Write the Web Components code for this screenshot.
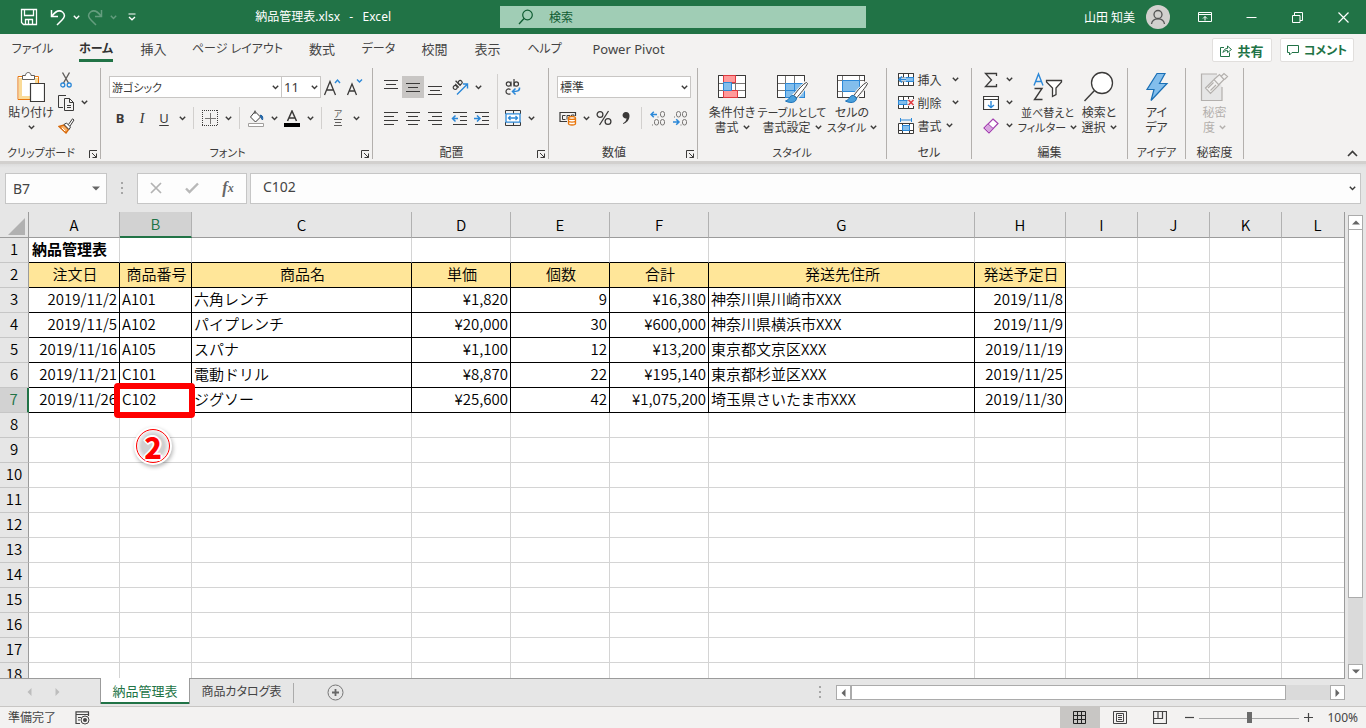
<!DOCTYPE html>
<html lang="ja">
<head>
<meta charset="utf-8">
<title>納品管理表.xlsx - Excel</title>
<style>
html, body { margin: 0; height: 100%; }
body { font-family: "Noto Sans", "Noto Sans CJK JP", sans-serif; font-size: 12px; color: #3b3a39; overflow: hidden; }
</style>
</head>
<body>
<xl-app></xl-app>
<script>
const svg = (w, h, body) => `<svg width="${w}" height="${h}" viewBox="0 0 ${w} ${h}" fill="none" stroke="currentColor" stroke-width="1" aria-hidden="true">${body}</svg>`;
const lines = (list, y0) => list.map(([a, b], i) => `<path d="M${a} ${y0 + i * 4}.5H${b}"/>`).join('');
const gridLines = '<path stroke="#797775" d="M8.5 .5V22M17.5 .5V22M.5 8.5H28M.5 15.5H28"/><path stroke="#3b3a39" d="M.5 .5H27.5V22.5H.5z"/>';
const brush = '<path fill="#f3f2f1" stroke="#f3f2f1" stroke-width="3" d="M29 7 16 21 19 24 31 9z"/><path fill="#fff" stroke="#3b3a39" d="M29.5 7.5C26 9 20 16 17 20.500L19.500 23C23 19 29 12 30.500 8.500z"/><path fill="#4aa0dc" stroke="#1a6fb5" d="M16.500 20.500C12 20 13 25 8.500 26 13 28.500 19.500 28 19.500 23z"/>';
const smallGrid = '<path fill="#fff" d="M.5 1.500H15.500V13.500H.5z"/><path stroke="#3b3a39" d="M.5 1.500H15.500V13.500H.5zM5.500 1.500V13.500M10.500 1.500V13.500M.5 5.500H15.500M.5 9.500H15.500"/>';
const ICONS = {
  chev: svg(7, 5, '<path stroke-width="1.400" d="M.8 .8 3.500 3.500 6.200 .8"/>'),
  up: svg(11, 7, '<path stroke-width="1.600" d="M1 6 5.500 1.500 10 6"/>'),
  launch: svg(10, 10, '<path d="M1.500 9V1.500H9M4 4 8.500 8.500M8.500 4.500V8.500H4.500"/>'),
  save: svg(18, 18, '<path stroke-width="1.300" d="M1.500 1.500H16.500V16.500H3.500L1.500 14.500zM4.500 1.500V7.500H13.500V1.500M5.500 16V11.500H12.500V16M8.500 12V16"/>'),
  undo: svg(16, 18, '<path stroke-width="1.500" d="M1.500 2V8.500H8M2 8C5 4 9 1.500 12.500 4 16 7 14 10 12 12L7 17"/>'),
  redo: svg(16, 18, '<path stroke-width="1.500" d="M14.500 2V8.500H8M14 8C11 4 7 1.500 3.500 4 0 7 2 10 4 12L9 17"/>'),
  qat: svg(8, 8, '<path d="M.5 1H7.500"/><path stroke-width="1.300" d="M1 4 4 6.800 7 4"/>'),
  search: svg(16, 16, '<circle cx="9.500" cy="6" r="4.800" stroke-width="1.200"/><path stroke-width="1.300" d="M6 9.500 1 15"/>'),
  person: svg(24, 24, '<circle cx="12" cy="12" r="12" fill="#d2d0ce" stroke="none"/><circle cx="12" cy="9.500" r="4" stroke="#555" stroke-width="1.300"/><path stroke="#555" stroke-width="1.300" d="M5.500 19C6 15.500 9 13.800 12 13.800S18 15.500 18.500 19"/>'),
  ribbonopt: svg(14, 12, '<path d="M.5 1.500H13.500V10.500H.5zM.5 3.500H13.500M7 9.500V5.500M5 7.500 7 5.500 9 7.500"/>'),
  min: svg(11, 11, '<path d="M.5 5.500H10.500"/>'),
  restore: svg(11, 11, '<path d="M.5 3.500H8V10.500H.5zM2.500 3.500V.5H10.500V8.500H8"/>'),
  close: svg(11, 11, '<path stroke-width="1.200" d="M.5 .5 10.500 10.500M10.500 .5 .5 10.500"/>'),
  share: svg(12, 13, '<path d="M4 3.500H.5V12.500H9.500V8.500M3 8.500C3.500 5.500 5.500 4.500 7.500 4.500V2L11.500 5.500 7.500 8.500V6.500C5.500 6.500 4 7 3 8.500z"/>'),
  comment: svg(12, 12, '<path d="M.5 1.500H11.500V8.500H5L2.500 11V8.500H.5z"/>'),
  paste: svg(28, 32, '<path fill="#fff" stroke="#e8760c" d="M1 5.500H21.500V28.500H1z"/><path stroke="#fadb98" stroke-width="3" d="M3.500 7V26.500H19.500V7"/><path fill="#fff" stroke="#605e5c" d="M5.500 8.500V4.500H8.500C8.500 .5 14 .5 14 4.500H17.500V8.500z"/><path fill="#fff" stroke="#3b3a39" stroke-width="1.200" d="M13.500 12.500H27.500V30.500H13.500z"/>'),
  cut: svg(12, 16, '<path stroke="#605e5c" stroke-width="1.400" d="M2.500 .5 8.500 11M9.500 .5 3.500 11"/><circle cx="2.800" cy="13" r="2" stroke="#2b88d8" stroke-width="1.300"/><circle cx="9.200" cy="13" r="2" stroke="#2b88d8" stroke-width="1.300"/>'),
  copy: svg(16, 16, '<path d="M5 12.500H.5V.5H8M6.500 3.500H11.500L15.500 7.500V15.500H6.500zM11.500 3.500V7.500H15.500M9 10.500H13M9 12.500H13"/>'),
  painter: svg(17, 16, '<path fill="#f9b26b" stroke="#d86a0c" stroke-width="1.400" d="M1 8.500 6 7 10.500 11.500 8 15z"/><path stroke="#fff" d="M4 10 7 13"/><path fill="#fff" stroke="#3b3a39" d="M6 6.500 11 11.500 12.500 9 8.500 5zM10.500 6.500 14.500 .8 16 2 12 8"/>'),
  growA: svg(18, 18, '<path stroke-width="1.300" d="M1.500 17 7 3.500 12.500 17M3.500 12H10.500"/><path stroke="#2b88d8" stroke-width="1.400" d="M12 5 14.500 2 17 5"/>'),
  shrinkA: svg(18, 18, '<path stroke-width="1.300" d="M2.500 17 7 6 11.500 17M4 13H10"/><path stroke="#2b88d8" stroke-width="1.400" d="M12 1.500 14.500 4 17 1.500"/>'),
  border: svg(16, 16, '<path stroke-dasharray="1 1" d="M0 .5H16M0 15.500H16M.5 0V16M15.500 0V16"/><path stroke="#797775" d="M8.500 3V14M3 8.500H14"/>'),
  fill: svg(17, 17, '<path fill="#fff" d="M7 1.500 12.500 7 7.500 12 2.500 7z"/><path d="M7 4V.5"/><path fill="#2b6fb5" stroke="#1a5fa0" d="M12.500 5C15 5.500 15 8 14.500 10 13.500 8.500 12.500 8 12.500 5z"/><path fill="#fff" stroke="#a19f9d" d="M.5 13.500H15.500V16.500H.5z"/>'),
  fontcolor: svg(16, 17, '<path stroke-width="1.500" d="M3.500 11 8 1 12.500 11M5 8H11"/><path fill="#000" stroke="none" d="M0 13H16V17H0z"/>'),
  top: svg(22, 22, lines([[4, 18], [6, 16], [4, 18]], 4)),
  mid: svg(22, 22, lines([[4, 18], [6, 16], [4, 18]], 7)),
  bot: svg(22, 22, lines([[4, 18], [6, 16], [4, 18]], 10)),
  left: svg(22, 22, lines([[4, 18], [4, 14], [4, 18], [4, 14]], 5)),
  center: svg(22, 22, lines([[4, 18], [6, 16], [4, 18], [6, 16]], 5)),
  right: svg(22, 22, lines([[4, 18], [8, 18], [4, 18], [8, 18]], 5)),
  outdent: svg(22, 22, lines([[4, 18], [11, 18], [11, 18], [4, 18]], 5) + '<path stroke="#2b88d8" stroke-width="1.500" d="M3.500 11.500H9M6.500 8.500 3.500 11.500 6.500 14.500"/>'),
  indent: svg(22, 22, lines([[4, 18], [11, 18], [11, 18], [4, 18]], 5) + '<path stroke="#2b88d8" stroke-width="1.500" d="M3 11.500H9M6 8.500 9 11.500 6 14.500"/>'),
  orient: svg(18, 18, '<g stroke-width="1.200" transform="rotate(-45 6 7)"><circle cx="3" cy="7.500" r="2"/><path d="M5.500 5V10M8 3V10"/><circle cx="10" cy="7.500" r="2"/></g><path stroke="#2b88d8" stroke-width="1.400" d="M6 16.500 16 6.500M12 6H16.500V10.500"/>'),
  wrap: svg(16, 18, '<g stroke-width="1.200"><circle cx="3.500" cy="6" r="2.200"/><path d="M6 3.500V8.500M9 1V8.500"/><circle cx="11.300" cy="6" r="2.200"/><path d="M5.500 11.500C3 10 1 11.500 1 13.500S3 17 5.500 15.700"/></g><path stroke="#2b88d8" stroke-width="1.500" d="M14.500 9.500C15 13 12 13.500 7.500 13.500M10.500 10.500 7.500 13.500 10.500 16.500"/>'),
  merge: svg(16, 16, '<path stroke="#3b3a39" d="M.5 4V.5H15.500V4M8.500 .5V4M.5 12V15.500H15.500V12M8.500 12V15.500"/><path fill="#fff" stroke="#2b88d8" stroke-width="1.300" d="M1 3.800H15V12.200H1z"/><path stroke="#2b88d8" stroke-width="1.300" d="M3.500 8H12.500M5.500 6 3.500 8 5.500 10M10.500 6 12.500 8 10.500 10"/>'),
  money: svg(18, 16, '<path stroke-width="1.200" d="M16.500 6V2.500H1V11.500H8"/><path d="M6.500 5.500H3.500V9.500H6.500M11 7V5.500H8V9.500M15 6V5H12.500V7"/><path fill="#fff" stroke="#e8760c" stroke-width="1.300" d="M9.500 8V13.500C9.500 15.500 16.500 15.500 16.500 13.500V8C16.500 6 9.500 6 9.500 8C9.500 9.800 16.500 9.800 16.500 8M9.500 10.800C9.500 12.500 16.500 12.500 16.500 10.800"/>'),
  percent: svg(16, 16, '<circle cx="4" cy="4.500" r="2.900" stroke-width="1.300"/><circle cx="12" cy="11.500" r="2.900" stroke-width="1.300"/><path stroke-width="1.300" d="M12.500 1 3.500 15"/>'),
  comma: svg(10, 14, '<path fill="currentColor" stroke="none" d="M5 1A3.200 3.200 0 1 0 5.500 7.300C5.500 9.500 4 11.300 2 12.300V13C5.500 12 8.500 9 8.500 4.700 8.500 2.500 7.200 1 5 1z"/>'),
  decinc: svg(16, 16, '<g stroke="#797775"><rect x="10.500" y="1.500" width="4" height="5.500" rx="2"/><rect x="4.500" y="9.500" width="4" height="5.500" rx="2"/><rect x="10.500" y="9.500" width="4" height="5.500" rx="2"/><path d="M7.500 7H8.500M2 15H3"/></g><path stroke="#2b88d8" stroke-width="1.500" d="M1 4.500H7M3.800 1.700 1 4.500 3.800 7.300"/>'),
  decdec: svg(16, 16, '<g stroke="#797775"><rect x="4.500" y="1.500" width="4" height="5.500" rx="2"/><rect x="10.500" y="1.500" width="4" height="5.500" rx="2"/><rect x="10.500" y="9.500" width="4" height="5.500" rx="2"/><path d="M2 7H3M8.500 15H9.500"/></g><path stroke="#2b88d8" stroke-width="1.500" d="M1 12H7M4.200 9.200 7 12 4.200 14.800"/>'),
  cond: svg(32, 32, `<g transform="translate(2 4)"><path fill="#fff" d="M.5 .5H27.500V22.500H.5z"/>${gridLines}<path fill="#ff9a9a" stroke="#e0383e" d="M5.500 .5H17.500V7.500H5.500zM5.500 15.500H19.500V22.500H5.500z"/><path fill="#83beec" stroke="#2b88d8" d="M5.500 7.500H13.500V15.500H5.500z"/></g>`),
  tablefmt: svg(32, 32, `<g transform="translate(1 4)"><path fill="#fff" d="M.5 .5H27.500V22.500H.5z"/>${gridLines}<path fill="#83beec" stroke="#2b88d8" d="M8.500 8.500H27.500V22.500H8.500zM17.500 8.500V22.500M8.500 15.500H27.500"/>${brush}</g>`),
  cellstyle: svg(32, 32, `<g transform="translate(1 4)"><path fill="#fff" d="M.5 .5H27.500V22.500H.5z"/><path stroke="#797775" d="M5.500 .5V22M22.500 .5V22M.5 5.500H28M.5 16.500H28"/><path stroke="#3b3a39" d="M.5 .5H27.500V22.500H.5z"/><path fill="#83beec" stroke="#2b88d8" d="M5.500 5.500H22.500V16.500H5.500z"/>${brush}</g>`),
  cins: svg(16, 15, smallGrid + '<path fill="#83beec" stroke="#2b88d8" d="M6.500 5.500H15.500V9.500H6.500z"/><path stroke="#f3f2f1" stroke-width="4" d="M1 7.500H8"/><path stroke="#2b88d8" stroke-width="1.500" d="M1 7.500H8M4 4.500 1 7.500 4 10.500"/>'),
  cdel: svg(16, 15, smallGrid + '<path fill="#83beec" stroke="#2b88d8" d="M.5 5.500H9V9.500H.5z"/><path fill="#f3f2f1" stroke="none" d="M9.500 4H16V11H9.500z"/><path stroke="#e0383e" stroke-width="1.500" d="M10.500 5 15.500 10M15.500 5 10.500 10"/>'),
  cfmt: svg(16, 16, '<path stroke="#2b88d8" d="M2.500 0V4M13.500 0V4M2.500 2H13.500"/><path fill="#fff" stroke="#3b3a39" d="M.5 5.500H15.500V15.500H.5zM4.500 5V15M11.500 5V15M.5 12.500H15.500"/><path fill="#83beec" stroke="#2b88d8" d="M4.500 7.500H11.500V12.500H4.500z"/>'),
  sum: svg(14, 16, '<path stroke-width="1.300" d="M12.500 4V1.500H1.500L7.500 8 1.500 14.500H12.500V12"/>'),
  filldown: svg(16, 14, '<path fill="#fff" stroke-width="1.200" d="M.5 .5H15.500V13.500H.5zM.5 3.500H15.500"/><path stroke="#2b88d8" stroke-width="1.400" d="M8 5V11.500M5 9 8 11.500 11 9"/>'),
  erase: svg(16, 16, '<path fill="#fff" stroke="#a33fb0" stroke-width="1.200" d="M10 1 15 5.500 6 15 1 10z"/><path fill="#d8a5df" stroke="#a33fb0" d="M5 5.800 10.200 10.500 6 15 1 10z"/>'),
  sort: svg(30, 32, '<path stroke="#2b88d8" stroke-width="1.400" d="M1 14.500 5.500 3 10 14.500M2.500 10.500H8.500"/><path stroke-width="1.400" d="M1.500 17.500H9L1.500 28.500H9.500"/><path fill="#fff" stroke-width="1.300" d="M13.500 9.500H28.500V11L23 17V23.500L19.500 25.500V17L13.500 11z"/>'),
  find: svg(32, 32, '<circle cx="19" cy="12" r="10.500" fill="#fff" stroke-width="1.300"/><path stroke-width="1.400" d="M11.500 19.500 1.500 30"/>'),
  bolt: svg(24, 32, '<path fill="#83beec" stroke="#1a6fb5" stroke-width="1.200" d="M12 2.500H20L14.500 12.500H22L6 29.500 9 18.500H2z"/>'),
  sens: svg(30, 32, '<g stroke="#b3b0ad" stroke-width="1.200"><path fill="#e6e6e6" d="M17 3H1.500V29.500H22V16"/><path fill="#f3f2f1" d="M5.500 17 14 8.500 19 14 10.500 22.500zM8 17 13.500 11.500M10.500 19.500 16 14M14 8.500 19.500 3.500 24 8.500 19 13.500M21 5.500 24 2.500 27.500 5.500 24.500 8.500"/></g>'),
  x: svg(12, 12, '<path stroke="#b3b3b3" stroke-width="1.700" d="M1 1 11 11M11 1 1 11"/>'),
  check: svg(14, 12, '<path stroke="#b8b8b8" stroke-width="2.400" d="M1 6.500 4.500 10 13 1.500"/>'),
  tri: svg(8, 5, '<path fill="#666" stroke="none" d="M0 .5H8L4 4.500z"/>'),
  triup: svg(8, 5, '<path fill="#666" stroke="none" d="M0 4.500H8L4 .5z"/>'),
  tril: svg(5, 8, '<path fill="currentColor" stroke="none" d="M4.500 0V8L.5 4z"/>'),
  trir: svg(5, 8, '<path fill="currentColor" stroke="none" d="M.5 0V8L4.500 4z"/>'),
  dots: svg(3, 12, '<path fill="#a6a6a6" stroke="none" d="M0 0H2V2H0zM0 5H2V7H0zM0 10H2V12H0z"/>'),
  corner: svg(18, 18, '<path fill="#b1b1b1" stroke="none" d="M17 0V17H0z"/>'),
  plus: svg(17, 17, '<circle cx="8.500" cy="8.500" r="7.500" stroke="#767676"/><path stroke="#666" stroke-width="1.800" d="M8.500 5V12M5 8.500H12"/>'),
  macro: svg(15, 14, '<path stroke-width="1.200" d="M5 12.500H1V.8H13.500V5M1 3.500H13.500M3 6.500H6M3 9H5"/><circle cx="10" cy="9" r="4"/><circle cx="10" cy="9" r="2" fill="currentColor" stroke="none"/>'),
  vnormal: svg(14, 14, '<path stroke="#222" d="M.5 .5H12.500V12.500H.5zM4.500 .5V12.500M8.500 .5V12.500M.5 4.500H12.500M.5 8.500H12.500"/>'),
  vlayout: svg(14, 14, '<path d="M.5 .5H13.500V12.500H.5zM3.500 2.500H10.500V10.500H3.500zM5 4.500H9M5 6.500H9M5 8.500H9"/>'),
  vbreak: svg(14, 14, '<path stroke-width="1.200" d="M.5 .5H13.500V12.500H.5zM5 .5V7.500H9.500V.5M.5 7.500H5"/>')
};

/* Shared rules for every shadow root. */
const base = `
*, *::before { box-sizing: border-box; }
:host { display: block; box-sizing: border-box; font-feature-settings: "palt"; }
svg { display: block; flex: none; }
button, select, input { font: inherit; font-feature-settings: inherit; color: inherit; background: none; border: 0; padding: 0; margin: 0; border-radius: 0; }
button { display: inline-flex; align-items: center; justify-content: center; white-space: nowrap; }
.kana { font-size: 11px; }`;

function define(name, css, html) {
  customElements.define(name, class extends HTMLElement {
    constructor() {
      super();
      const t = document.createElement('template');
      t.innerHTML = `<style>${base}${css}</style>${typeof html === 'function' ? html(this) : html}`;
      this.attachShadow({ mode: 'open' }).append(t.content.cloneNode(true));
    }
  });
}

const I = n => ICONS[n];
const kana = s => /[\u3041-\u30ff]{4,}/.test(s) || /べ/.test(s) ? 'kana' : '';
const tool = (n, label, cls = '') => `<button type="button" class="t ${cls}" aria-label="${label}">${I(n)}</button>`;
const drop = label => `<button type="button" class="c" aria-label="${label}">${I('chev')}</button>`;
const sep = '<span class="s"></span>';

define('title-bar', `
:host { display: grid; grid-template-columns: 1fr 366px 1fr; height: 34px; background: #217346; color: #fff; align-items: center; }
.left, .right { display: flex; align-items: center; height: 100%; }
.left { padding-left: 20px; }
.left button { height: 24px; }
.sv { width: 18px; margin-right: 9px; } .un { width: 22px; } .cv { width: 15px; } .rd { width: 22px; } .dim { opacity: .3; }
h1 { font-size: 12px; font-weight: 400; line-height: 16px; margin: 0 109px 0 auto; white-space: pre; }
.search { display: flex; align-items: center; gap: 15px; height: 22px; background: #a0cdb5; color: #0f5c32; padding-left: 18px; }
.search input { flex: 1; min-width: 0; height: 20px; outline: 0; }
.search input::placeholder { color: inherit; opacity: 1; }
.right { justify-content: flex-end; }
.user { gap: 11px; margin-right: 12px; height: 100%; }
.win { width: 46px; height: 100%; }`, `
<div class="left">
<button class="sv" type="button" aria-label="上書き保存">${I('save')}</button>
<button class="un" type="button" aria-label="元に戻す">${I('undo')}</button><button class="cv" type="button" aria-label="元に戻す一覧">${I('chev')}</button>
<button class="rd dim" type="button" aria-label="やり直し">${I('redo')}</button><button class="cv dim" type="button" aria-label="やり直し一覧">${I('chev')}</button>
<button class="un" type="button" aria-label="クイック アクセス">${I('qat')}</button>
<h1>納品管理表.xlsx   -   Excel</h1></div>
<label class="search">${I('search')}<input type="text" placeholder="検索" aria-label="検索"></label>
<div class="right"><button class="user" type="button">山田 知美${I('person')}</button>
<button class="win" type="button" aria-label="リボンの表示オプション">${I('ribbonopt')}</button>
<button class="win" type="button" aria-label="最小化">${I('min')}</button>
<button class="win" type="button" aria-label="元のサイズ">${I('restore')}</button>
<button class="win" type="button" aria-label="閉じる">${I('close')}</button></div>`);

define('ribbon-tabs', `
:host { display: flex; align-items: center; height: 32px; background: #f3f2f1; color: #444; padding-right: 12px; }
nav { display: grid; grid-template-columns: 65px 62px 53px 115px 54px 59px 53px 53px 61px 107px; flex: 1; height: 100%; }
nav button { font-size: 13px; line-height: 20px; height: 28px; padding-top: 2px; }
nav .k { font-size: 12px; }
nav .on { font-size: 12px; font-weight: 700; justify-self: center; border-bottom: 3px solid #217346; padding-top: 5px; width: 34px; color: #323130; }
.act { height: 24px; background: #fff; border: 1px solid #e1dfdd; border-radius: 2px; color: #217346; font-weight: 700; gap: 5px; margin-left: 8px; }
.share { width: 60px; font-size: 13px; } .cm { width: 74px; }`, `
<nav>${['ファイル', 'ホーム', '挿入', 'ページ レイアウト', '数式', 'データ', '校閲', '表示', 'ヘルプ', 'Power Pivot'].map((t, i) => `<button type="button" class="${i === 1 ? 'on' : /[ァ-ー]{3}/.test(t) ? 'k' : ''}">${t}</button>`).join('')}</nav>
<button type="button" class="act share">${I('share')}共有</button><button type="button" class="act cm">${I('comment')}コメント</button>`);

define('ribbon-group', `
:host { display: flex; flex-direction: column; height: 91px; border-right: 1px solid #b3b0ad; flex: none; }
.body { height: 77px; }
footer { display: grid; grid-template-columns: 1fr; height: 14px; line-height: 16px; white-space: nowrap; align-items: center; }
footer.two { grid-template-columns: 1fr 18px; }
footer span { justify-self: center; }
footer button { justify-self: end; margin: 2px 2px 0 0; }`,
  el => {
    const label = el.getAttribute('label'), two = el.hasAttribute('launcher');
    return `<div class="body"><slot></slot></div><footer class="${two ? 'two' : ''}"><span class="${kana(label)}">${label}</span>${two ? `<button type="button" aria-label="詳細設定">${I('launch')}</button>` : ''}</footer>`;
  });

const big = (n, l1, l2, w, cls = '', c = true) => `<button type="button" class="big ${cls}" style="width:${w}px"><span class="ic">${I(n)}</span><span class="${kana(l1)}">${l1}</span><span class="l2 ${kana(l2)}">${l2}${c ? I('chev') : ''}</span></button>`;
define('xl-ribbon', `
:host { display: flex; height: 98px; padding-top: 2px; background: #f3f2f1; border-bottom: 3px solid #d2d0ce; }
.row { display: flex; align-items: center; }
.tools { display: flex; flex-direction: column; gap: 9px; padding: 8px 6px 0 8px; }
.tools .row { height: 22px; }
.t { width: 22px; height: 22px; flex: none; }
.c { width: 14px; height: 22px; flex: none; }
.s { width: 1px; height: 22px; margin: 0 5px 0 4px; background: #d2d0ce; flex: none; }
.sel { background: #c8c6c4; }
.b { font-weight: 700; font-size: 13px; } .i { font-style: italic; font-family: "Liberation Serif", serif; font-size: 15px; } .u { text-decoration: underline; text-underline-offset: 2px; font-size: 13px; }
.combo { display: grid; grid-template-columns: 1fr 9px; align-items: center; height: 22px; border: 1px solid #c8c6c4; background: #fff; }
.combo select { appearance: none; grid-area: 1 / 1 / 2 / 3; height: 20px; padding-left: 2px; width: 100%; outline: 0; }
.combo svg { grid-area: 1 / 2; pointer-events: none; }
.size select { font-size: 13px; }
.big { display: flex; flex-direction: column; align-items: center; justify-content: flex-start; line-height: 15px; height: 77px; padding-top: 1px; }
.big .ic { display: grid; place-items: center; height: 36px; }
.l2 { display: flex; align-items: center; gap: 4px; min-height: 15px; }
.side { display: grid; align-content: start; }
.side .row { height: 23px; }
.lab { gap: 3px; }
.off { color: #b3b0ad; }
.ruby { display: grid; gap: 1px; justify-items: center; font-size: 9px; line-height: 9px; color: #605e5c; }
.halign { display: grid; grid-template-columns: 117px 50px; padding-left: 7px; }
.halign > .tools { padding-left: 0; padding-right: 0; }
.halign > .wrapcol { background: linear-gradient(#d2d0ce, #d2d0ce) 0 6px / 1px 59px no-repeat; padding-left: 5px; }
.collapse { margin: 82px 8px 0 auto; align-self: flex-start; }`, `
<ribbon-group label="クリップボード" launcher style="width:101px"><div class="row" style="align-items:flex-start;padding-left:7px">${big('paste', '貼り付け', '', 48)}
<div class="side"><div class="row">${tool('cut', '切り取り')}</div><div class="row">${tool('copy', 'コピー')}${drop('コピー一覧')}</div><div class="row">${tool('painter', '書式のコピー')}</div></div></div></ribbon-group>
<ribbon-group label="フォント" launcher style="width:272px"><div class="tools"><div class="row">
<label class="combo" style="width:173px"><select class="kana" aria-label="フォント名"><option>游ゴシック</option></select>${I('chev')}</label>
<label class="combo size" style="width:40px;margin-left:-1px"><select aria-label="サイズ"><option>11</option></select>${I('chev')}</label>
${tool('growA', 'フォント サイズの拡大')}${tool('shrinkA', 'フォント サイズの縮小')}</div>
<div class="row"><button type="button" class="t b">B</button><button type="button" class="t i">I</button><button type="button" class="t u">U</button>${drop('下線')}${sep}${tool('border', '罫線')}${drop('罫線一覧')}${sep}${tool('fill', '塗りつぶし')}${drop('塗りつぶし一覧')}${tool('fontcolor', 'フォントの色')}${drop('フォントの色一覧')}${sep}<button type="button" class="t" aria-label="ふりがな"><span class="ruby">ア${svg(8, 8, '<path d="M0 .5H8M1 3.500H7M0 6.500H8"/>')}</span></button>${drop('ふりがな一覧')}</div></div></ribbon-group>
<ribbon-group label="配置" launcher style="width:176px"><div class="halign"><div class="tools">
<div class="row">${tool('top', '上揃え')}${tool('mid', '上下中央揃え', 'sel')}${tool('bot', '下揃え')}<span style="width:3px"></span>${tool('orient', '方向')}${drop('方向一覧')}</div>
<div class="row">${tool('left', '左揃え')}${tool('center', '中央揃え')}${tool('right', '右揃え')}<span style="width:3px"></span>${tool('outdent', 'インデントを減らす')}${tool('indent', 'インデントを増やす')}</div></div>
<div class="tools wrapcol"><div class="row">${tool('wrap', '折り返して全体を表示する')}</div><div class="row">${tool('merge', 'セルを結合して中央揃え')}${drop('結合一覧')}</div></div></div></ribbon-group>
<ribbon-group label="数値" launcher style="width:149px"><div class="tools"><div class="row"><label class="combo" style="width:134px"><select aria-label="表示形式"><option>標準</option></select>${I('chev')}</label></div>
<div class="row">${tool('money', '通貨表示形式')}${drop('通貨一覧')}${tool('percent', 'パーセント')}${tool('comma', '桁区切り')}${sep}${tool('decinc', '小数点以下の表示桁数を増やす')}${tool('decdec', '小数点以下の表示桁数を減らす')}</div></div></ribbon-group>
<ribbon-group label="スタイル" style="width:189px"><div class="row" style="padding-left:4px">${big('cond', '条件付き', '書式', 60)}${big('tablefmt', 'テーブルとして', '書式設定', 60)}${big('cellstyle', 'セルの', 'スタイル', 60)}</div></ribbon-group>
<ribbon-group label="セル" style="width:85px"><div class="side" style="padding-left:11px">${[['cins', '挿入'], ['cdel', '削除'], ['cfmt', '書式']].map(([n, l], k) => `<div class="row"><button type="button" class="lab" style="width:44px">${I(n)}${l}</button><button type="button" class="c" aria-label="${l}一覧" style="margin-left:${k < 2 ? 6 : 0}px">${I('chev')}</button></div>`).join('')}</div></ribbon-group>
<ribbon-group label="編集" style="width:156px"><div class="row" style="align-items:flex-start;padding-left:8px"><div class="side"><div class="row">${tool('sum', 'オート SUM')}${drop('オート SUM 一覧')}</div><div class="row">${tool('filldown', 'フィル')}${drop('フィル一覧')}</div><div class="row">${tool('erase', 'クリア')}${drop('クリア一覧')}</div></div>
${big('sort', '並べ替えと', 'フィルター', 63)}${big('find', '検索と', '選択', 40)}</div></ribbon-group>
<ribbon-group label="アイデア" style="width:58px">${big('bolt', 'アイ', 'デア', 57, '', false)}</ribbon-group>
<ribbon-group label="秘密度" style="width:58px">${big('sens', '秘密', '度', 57, 'off')}</ribbon-group>
<button type="button" class="collapse" aria-label="リボンを折りたたむ">${I('up')}</button>`);

define('formula-bar', `
:host { display: flex; align-items: center; height: 48px; padding: 0 5px; background: linear-gradient(#dcdcdc, #e6e6e6 4px); font-size: 14px; }
.box { display: flex; align-items: center; height: 31px; background: #fdfdfd; border: 1px solid #c6c6c6; }
.name { width: 102px; padding: 0 6px 0 7px; }
input { min-width: 0; flex: 1; outline: 0; height: 26px; color: #444; }
.dots { margin: 0 13px 0 14px; }
.fn { width: 110px; margin-right: 3px; }
.fn button { width: 36px; height: 29px; }
.fx { font: italic 700 16px "Liberation Serif", serif; color: #666; }
.fx small { font-size: 12px; }
.in { flex: 1; padding: 0 4px 0 12px; }
.in input { padding-bottom: 4px; }`, `
<div class="box name"><input aria-label="名前ボックス" value="B7">${I('tri')}</div><span class="dots">${I('dots')}</span>
<div class="box fn"><button type="button" aria-label="キャンセル">${I('x')}</button><button type="button" aria-label="入力">${I('check')}</button><button type="button" class="fx" aria-label="関数の挿入">f<small>x</small></button></div>
<div class="box in"><input aria-label="数式バー" value="C102">${I('chev')}</div>`);

const COLS = [['A', 91], ['B', 72], ['C', 220], ['D', 99], ['E', 99], ['F', 99], ['G', 266], ['H', 91], ['I', 72], ['J', 72], ['K', 72], ['L', 72]];
const DATA = [
  ['注文日', '商品番号', '商品名', '単価', '個数', '合計', '発送先住所', '発送予定日'],
  ['2019/11/2', 'A101', '六角レンチ', '¥1,820', '9', '¥16,380', '神奈川県川崎市XXX', '2019/11/8'],
  ['2019/11/5', 'A102', 'パイプレンチ', '¥20,000', '30', '¥600,000', '神奈川県横浜市XXX', '2019/11/9'],
  ['2019/11/16', 'A105', 'スパナ', '¥1,100', '12', '¥13,200', '東京都文京区XXX', '2019/11/19'],
  ['2019/11/21', 'C101', '電動ドリル', '¥8,870', '22', '¥195,140', '東京都杉並区XXX', '2019/11/25'],
  ['2019/11/26', 'C102', 'ジグソー', '¥25,600', '42', '¥1,075,200', '埼玉県さいたま市XXX', '2019/11/30']
];
const RIGHT = new Set([0, 3, 4, 5, 7]);
function sheetRow(r) {
  const d = DATA[r - 2];
  const cells = COLS.map((_, c) => {
    const cls = [];
    if (r <= 7 && c < 8) cls.push(r === 1 ? 'ub' : 'bd');
    if (r === 2 && c < 8) cls.push('hd');
    if (r > 2 && RIGHT.has(c)) cls.push('num');
    if (r === 1 && c === 0) return `<td class="ub title">納品管理表</td>`;
    if (r === 7 && c === 1) cls.push('cur');
    return `<td class="${cls.join(' ')}">${d && d[c] || ''}${r === 7 && c === 1 ? '<span class="mark"></span><step-badge>2</step-badge>' : ''}</td>`;
  }).join('');
  return `<tr><th scope="row"${r === 7 ? ' class="on"' : ''}>${r}</th>${cells}</tr>`;
}

define('step-badge', `
:host { position: absolute; left: 14px; top: 39px; width: 38px; height: 38px; border-radius: 50%; background: #fff; box-shadow: 1px 2px 4px rgba(0,0,0,.3); display: grid; place-items: center; z-index: 2; }
.ring { display: grid; place-items: center; width: 34px; height: 34px; border: 1px solid #f00; border-radius: 50%; background: radial-gradient(#d0d0d0 50%, #fff 75%); color: #f00; font: 900 29px/30px "Noto Sans CJK JP", sans-serif; text-shadow: 2px 0 #fff, -2px 0 #fff, 0 2px #fff, 0 -2px #fff, 1px 1px #fff, -1px -1px #fff; }`,
  '<span class="ring"><slot></slot></span>');

define('sheet-grid', `
:host { flex: 1; min-height: 0; display: grid; grid-template-columns: 1fr 21px; background: #e6e6e6; font-family: "Noto Sans CJK JP", sans-serif; font-feature-settings: normal; }
.view { overflow: hidden; border-right: 1px solid #9b9b9b; border-bottom: 1px solid #9b9b9b; min-width: 0; background: #fff; }
table { table-layout: fixed; border-collapse: separate; border-spacing: 0; width: max-content; min-width: 1354px; color: #000; font-size: 15px; line-height: 22px; }
th { font-weight: 350; padding: 0; background: #e6e6e6; }
thead th { height: 26px; border-right: 1px solid #b1b1b1; border-bottom: 1px solid #9b9b9b; }
thead th.on { background: #d2d2d2; color: #217346; border-bottom: 2px solid #217346; }
thead th:first-child { border-right-color: #9b9b9b; }
thead svg { margin: 5px 0 0 8px; }
tbody th { height: 25px; padding-bottom: 2px; border-right: 1px solid #9b9b9b; border-bottom: 1px solid #c6c6c6; }
tbody th.on { background: #d2d2d2; color: #217346; border-right: 2px solid #217346; }
td { height: 25px; padding: 0 2px 2px 2px; border-right: 1px solid #d4d4d4; border-bottom: 1px solid #d4d4d4; white-space: nowrap; font-weight: 350; }
td.bd { border-color: #000; } td.ub { border-bottom-color: #000; }
td.title { font-weight: 700; padding-left: 3px; }
td.hd { background: #ffe699; text-align: center; padding-right: 0; }
td.num { text-align: right; padding-left: 0; }
td.cur { position: relative; }
.mark { position: absolute; left: -6px; top: -5px; width: 81px; height: 35px; border: 6px solid #f00; border-radius: 4px; z-index: 1; }
.bar { display: flex; flex-direction: column; width: 15px; margin: 3px 0 0 3px; background: #dadada; }
.bar button, .bar i { background: #fff; border: 1px solid #ababab; }
.bar button { height: 15px; flex: none; }
.bar i { flex: 370; margin-top: -1px; } .bar u { flex: 66; }`, `
<div class="view"><table><colgroup><col style="width:29px">${COLS.map(c => `<col style="width:${c[1]}px">`).join('')}</colgroup>
<thead><tr><th>${I('corner')}</th>${COLS.map(c => `<th scope="col"${c[0] === 'B' ? ' class="on"' : ''}>${c[0]}</th>`).join('')}</tr></thead>
<tbody>${Array.from({ length: 18 }, (_, i) => sheetRow(i + 1)).join('')}</tbody></table></div>
<div class="bar"><button type="button" aria-label="上へ">${I('triup')}</button><i></i><u></u><button type="button" aria-label="下へ">${I('tri')}</button></div>`);

define('sheet-tabs', `
:host { display: flex; align-items: flex-start; height: 27px; background: #e6e6e6; padding-right: 21px; }
.nav { display: flex; gap: 18px; width: 100px; height: 26px; padding-left: 24px; color: #bdbdbd; }
.nav button { width: 10px; height: 26px; }
.tab { height: 25px; line-height: 20px; color: #444; }
.on { font-size: 13px; width: 90px; margin-top: -1px; height: 26px; background: #fff; color: #217346; border: solid #9b9b9b; border-width: 0 1px 0; box-shadow: inset 0 -2px #217346; position: relative; }
.two { width: 103px; }
.sp { width: 1px; height: 20px; margin-top: 4px; background: #ababab; }
.add { margin: 5px auto 0 33px; }
.dots { margin: 7px 14px 0 0; }
.bar { display: flex; width: 509px; height: 15px; margin-top: 6px; background: #dadada; color: #666; }
.bar button, .bar i { background: #fff; border: 1px solid #ababab; }
.bar button { width: 15px; flex: none; }
.bar i { flex: 436; } .bar u { flex: 44; }`, `
<div class="nav"><button type="button" aria-label="前のシート">${I('tril')}</button><button type="button" aria-label="次のシート">${I('trir')}</button></div>
<button type="button" class="tab on">納品管理表</button><button type="button" class="tab two">商品カタログ表</button><span class="sp"></span>
<button type="button" class="add" aria-label="新しいシート">${I('plus')}</button><span class="dots">${I('dots')}</span>
<div class="bar"><button type="button" aria-label="左へ">${I('tril')}</button><i></i><u></u><button type="button" aria-label="右へ">${I('trir')}</button></div>`);

define('status-bar', `
:host { display: flex; align-items: center; height: 22px; background: #f3f2f1; border-top: 1px solid #c8c6c4; color: #444; padding: 0 8px; line-height: 16px; }
.macro { margin: 0 auto 0 19px; }
.v { width: 40px; height: 21px; } .v.on { background: #c8c6c4; }
.z { width: 19px; height: 21px; }
input { appearance: none; width: 100px; height: 16px; background: linear-gradient(#a6a6a6, #a6a6a6) 0 8px / 100% 1px no-repeat; }
input::-webkit-slider-thumb { appearance: none; width: 5px; height: 11px; background: #6b6b6b; }
output { width: 40px; text-align: right; }`, `
<span>準備完了</span><button type="button" class="macro" aria-label="マクロの記録">${I('macro')}</button>
<button type="button" class="v on" aria-label="標準">${I('vnormal')}</button><button type="button" class="v" aria-label="ページ レイアウト">${I('vlayout')}</button><button type="button" class="v" aria-label="改ページ プレビュー">${I('vbreak')}</button>
<button type="button" class="z" aria-label="縮小">${svg(9, 9, '<path stroke-width="1.200" d="M0 4.500H9"/>')}</button><input type="range" min="0" max="200" value="100" aria-label="ズーム"><button type="button" class="z" aria-label="拡大">${svg(9, 9, '<path stroke-width="1.200" d="M0 4.500H9M4.500 0V9"/>')}</button><output>100%</output>`);

define('xl-app', ':host { display: flex; flex-direction: column; height: 100vh; background: #e6e6e6; }',
  '<title-bar></title-bar><ribbon-tabs></ribbon-tabs><xl-ribbon></xl-ribbon><formula-bar></formula-bar><sheet-grid></sheet-grid><sheet-tabs></sheet-tabs><status-bar></status-bar>');
</script>
</body>
</html>
